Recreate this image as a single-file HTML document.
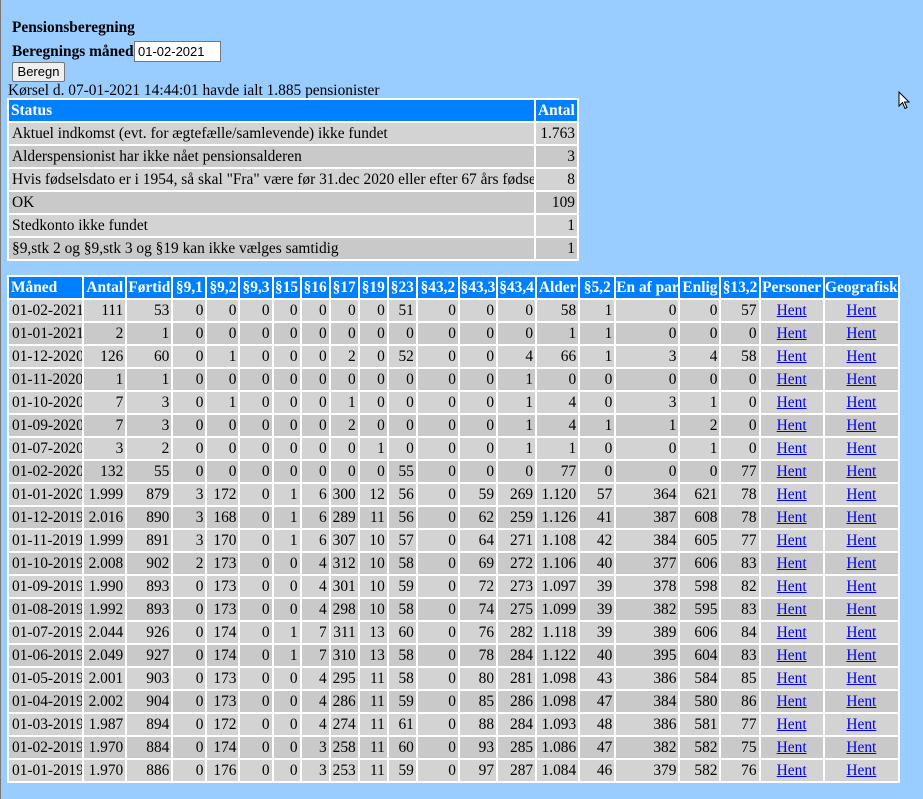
<!DOCTYPE html>
<html><head><meta charset="utf-8"><style>
html,body{margin:0;padding:0}
body{width:923px;height:799px;background:#99ccff;font-family:"Liberation Serif",serif;font-size:15.4px;color:#000;position:relative;overflow:hidden;border-left:1px solid #777;box-sizing:border-box}
.abs{position:absolute}
table{border-collapse:separate;border-spacing:2px;background:#fff;table-layout:fixed;position:absolute}
th{background:#0080ff;color:#fff;font-weight:bold;text-align:left;padding:0 2px;height:21px;white-space:nowrap;overflow:hidden}
td{height:21px;padding:0 2px;white-space:nowrap;overflow:hidden;text-align:right}
tr.a td{background:#d3d3d3}
tr.b td{background:#c9c9c9}
td.l{text-align:left;padding-left:3px}
td.c{text-align:center}
a{color:#00e;text-decoration:underline}
#t2 th{text-align:center;padding:0}
#t2 th.l{text-align:left;padding-left:2px}
</style></head><body>
<div class="abs" style="left:11px;top:19px;font-weight:bold">Pensionsberegning</div>
<div class="abs" style="left:11px;top:43px;font-weight:bold">Beregnings måned</div>
<div class="abs" style="left:133px;top:41px;width:87px;height:21px;background:#fff;border:1px solid #767676;box-sizing:border-box;font-family:'Liberation Sans',sans-serif;font-size:13px;line-height:19px;padding-left:3px">01-02-2021</div>
<div class="abs" style="left:11px;top:62px;width:53px;height:20px;background:#efefef;border:1px solid #767676;border-radius:2px;box-sizing:border-box;font-family:'Liberation Sans',sans-serif;font-size:13px;line-height:18px;text-align:center">Beregn</div>
<div class="abs" style="left:7px;top:82px">Kørsel d. 07-01-2021 14:44:01 havde ialt 1.885 pensionister</div>
<svg class="abs" style="left:897px;top:91px" width="14" height="20" viewBox="0 0 14 20"><path d="M1 1 L1 15 L4.5 11.5 L7 17.5 L9 16.5 L6.5 11 L11 11 Z" fill="#fff" stroke="#000" stroke-width="1"/></svg>

<table style="left:6px;top:98px;width:572px">
<colgroup><col style="width:525px"><col style="width:41px"></colgroup>
<tr><th>Status</th><th>Antal</th></tr>
<tr class="a"><td class="l">Aktuel indkomst (evt. for ægtefælle/samlevende) ikke fundet</td><td>1.763</td></tr>
<tr class="b"><td class="l">Alderspensionist har ikke nået pensionsalderen</td><td>3</td></tr>
<tr class="a"><td class="l">Hvis fødselsdato er i 1954, så skal "Fra" være før 31.dec 2020 eller efter 67 års fødselsdag</td><td>8</td></tr>
<tr class="b"><td class="l">OK</td><td>109</td></tr>
<tr class="a"><td class="l">Stedkonto ikke fundet</td><td>1</td></tr>
<tr class="b"><td class="l">§9,stk 2 og §9,stk 3 og §19 kan ikke vælges samtidig</td><td>1</td></tr>
</table>

<table id="t2" style="left:6px;top:275px;width:893px">
<colgroup><col style="width:73px"><col style="width:41px"><col style="width:44px"><col style="width:32px"><col style="width:31px"><col style="width:31px"><col style="width:26px"><col style="width:27px"><col style="width:27px"><col style="width:27px"><col style="width:27px"><col style="width:40px"><col style="width:36px"><col style="width:37px"><col style="width:41px"><col style="width:34px"><col style="width:62px"><col style="width:39px"><col style="width:37px"><col style="width:62px"><col style="width:73px"></colgroup>
<tr><th class="l">Måned</th><th>Antal</th><th>Førtid</th><th>§9,1</th><th>§9,2</th><th>§9,3</th><th>§15</th><th>§16</th><th>§17</th><th>§19</th><th>§23</th><th>§43,2</th><th>§43,3</th><th>§43,4</th><th>Alder</th><th>§5,2</th><th>En af par</th><th>Enlig</th><th>§13,2</th><th>Personer</th><th>Geografisk</th></tr>
<tr class="a"><td class="l">01-02-2021</td><td>111</td><td>53</td><td>0</td><td>0</td><td>0</td><td>0</td><td>0</td><td>0</td><td>0</td><td>51</td><td>0</td><td>0</td><td>0</td><td>58</td><td>1</td><td>0</td><td>0</td><td>57</td><td class="c"><a>Hent</a></td><td class="c"><a>Hent</a></td></tr>
<tr class="b"><td class="l">01-01-2021</td><td>2</td><td>1</td><td>0</td><td>0</td><td>0</td><td>0</td><td>0</td><td>0</td><td>0</td><td>0</td><td>0</td><td>0</td><td>0</td><td>1</td><td>1</td><td>0</td><td>0</td><td>0</td><td class="c"><a>Hent</a></td><td class="c"><a>Hent</a></td></tr>
<tr class="a"><td class="l">01-12-2020</td><td>126</td><td>60</td><td>0</td><td>1</td><td>0</td><td>0</td><td>0</td><td>2</td><td>0</td><td>52</td><td>0</td><td>0</td><td>4</td><td>66</td><td>1</td><td>3</td><td>4</td><td>58</td><td class="c"><a>Hent</a></td><td class="c"><a>Hent</a></td></tr>
<tr class="b"><td class="l">01-11-2020</td><td>1</td><td>1</td><td>0</td><td>0</td><td>0</td><td>0</td><td>0</td><td>0</td><td>0</td><td>0</td><td>0</td><td>0</td><td>1</td><td>0</td><td>0</td><td>0</td><td>0</td><td>0</td><td class="c"><a>Hent</a></td><td class="c"><a>Hent</a></td></tr>
<tr class="a"><td class="l">01-10-2020</td><td>7</td><td>3</td><td>0</td><td>1</td><td>0</td><td>0</td><td>0</td><td>1</td><td>0</td><td>0</td><td>0</td><td>0</td><td>1</td><td>4</td><td>0</td><td>3</td><td>1</td><td>0</td><td class="c"><a>Hent</a></td><td class="c"><a>Hent</a></td></tr>
<tr class="b"><td class="l">01-09-2020</td><td>7</td><td>3</td><td>0</td><td>0</td><td>0</td><td>0</td><td>0</td><td>2</td><td>0</td><td>0</td><td>0</td><td>0</td><td>1</td><td>4</td><td>1</td><td>1</td><td>2</td><td>0</td><td class="c"><a>Hent</a></td><td class="c"><a>Hent</a></td></tr>
<tr class="a"><td class="l">01-07-2020</td><td>3</td><td>2</td><td>0</td><td>0</td><td>0</td><td>0</td><td>0</td><td>0</td><td>1</td><td>0</td><td>0</td><td>0</td><td>1</td><td>1</td><td>0</td><td>0</td><td>1</td><td>0</td><td class="c"><a>Hent</a></td><td class="c"><a>Hent</a></td></tr>
<tr class="b"><td class="l">01-02-2020</td><td>132</td><td>55</td><td>0</td><td>0</td><td>0</td><td>0</td><td>0</td><td>0</td><td>0</td><td>55</td><td>0</td><td>0</td><td>0</td><td>77</td><td>0</td><td>0</td><td>0</td><td>77</td><td class="c"><a>Hent</a></td><td class="c"><a>Hent</a></td></tr>
<tr class="a"><td class="l">01-01-2020</td><td>1.999</td><td>879</td><td>3</td><td>172</td><td>0</td><td>1</td><td>6</td><td>300</td><td>12</td><td>56</td><td>0</td><td>59</td><td>269</td><td>1.120</td><td>57</td><td>364</td><td>621</td><td>78</td><td class="c"><a>Hent</a></td><td class="c"><a>Hent</a></td></tr>
<tr class="b"><td class="l">01-12-2019</td><td>2.016</td><td>890</td><td>3</td><td>168</td><td>0</td><td>1</td><td>6</td><td>289</td><td>11</td><td>56</td><td>0</td><td>62</td><td>259</td><td>1.126</td><td>41</td><td>387</td><td>608</td><td>78</td><td class="c"><a>Hent</a></td><td class="c"><a>Hent</a></td></tr>
<tr class="a"><td class="l">01-11-2019</td><td>1.999</td><td>891</td><td>3</td><td>170</td><td>0</td><td>1</td><td>6</td><td>307</td><td>10</td><td>57</td><td>0</td><td>64</td><td>271</td><td>1.108</td><td>42</td><td>384</td><td>605</td><td>77</td><td class="c"><a>Hent</a></td><td class="c"><a>Hent</a></td></tr>
<tr class="b"><td class="l">01-10-2019</td><td>2.008</td><td>902</td><td>2</td><td>173</td><td>0</td><td>0</td><td>4</td><td>312</td><td>10</td><td>58</td><td>0</td><td>69</td><td>272</td><td>1.106</td><td>40</td><td>377</td><td>606</td><td>83</td><td class="c"><a>Hent</a></td><td class="c"><a>Hent</a></td></tr>
<tr class="a"><td class="l">01-09-2019</td><td>1.990</td><td>893</td><td>0</td><td>173</td><td>0</td><td>0</td><td>4</td><td>301</td><td>10</td><td>59</td><td>0</td><td>72</td><td>273</td><td>1.097</td><td>39</td><td>378</td><td>598</td><td>82</td><td class="c"><a>Hent</a></td><td class="c"><a>Hent</a></td></tr>
<tr class="b"><td class="l">01-08-2019</td><td>1.992</td><td>893</td><td>0</td><td>173</td><td>0</td><td>0</td><td>4</td><td>298</td><td>10</td><td>58</td><td>0</td><td>74</td><td>275</td><td>1.099</td><td>39</td><td>382</td><td>595</td><td>83</td><td class="c"><a>Hent</a></td><td class="c"><a>Hent</a></td></tr>
<tr class="a"><td class="l">01-07-2019</td><td>2.044</td><td>926</td><td>0</td><td>174</td><td>0</td><td>1</td><td>7</td><td>311</td><td>13</td><td>60</td><td>0</td><td>76</td><td>282</td><td>1.118</td><td>39</td><td>389</td><td>606</td><td>84</td><td class="c"><a>Hent</a></td><td class="c"><a>Hent</a></td></tr>
<tr class="b"><td class="l">01-06-2019</td><td>2.049</td><td>927</td><td>0</td><td>174</td><td>0</td><td>1</td><td>7</td><td>310</td><td>13</td><td>58</td><td>0</td><td>78</td><td>284</td><td>1.122</td><td>40</td><td>395</td><td>604</td><td>83</td><td class="c"><a>Hent</a></td><td class="c"><a>Hent</a></td></tr>
<tr class="a"><td class="l">01-05-2019</td><td>2.001</td><td>903</td><td>0</td><td>173</td><td>0</td><td>0</td><td>4</td><td>295</td><td>11</td><td>58</td><td>0</td><td>80</td><td>281</td><td>1.098</td><td>43</td><td>386</td><td>584</td><td>85</td><td class="c"><a>Hent</a></td><td class="c"><a>Hent</a></td></tr>
<tr class="b"><td class="l">01-04-2019</td><td>2.002</td><td>904</td><td>0</td><td>173</td><td>0</td><td>0</td><td>4</td><td>286</td><td>11</td><td>59</td><td>0</td><td>85</td><td>286</td><td>1.098</td><td>47</td><td>384</td><td>580</td><td>86</td><td class="c"><a>Hent</a></td><td class="c"><a>Hent</a></td></tr>
<tr class="a"><td class="l">01-03-2019</td><td>1.987</td><td>894</td><td>0</td><td>172</td><td>0</td><td>0</td><td>4</td><td>274</td><td>11</td><td>61</td><td>0</td><td>88</td><td>284</td><td>1.093</td><td>48</td><td>386</td><td>581</td><td>77</td><td class="c"><a>Hent</a></td><td class="c"><a>Hent</a></td></tr>
<tr class="b"><td class="l">01-02-2019</td><td>1.970</td><td>884</td><td>0</td><td>174</td><td>0</td><td>0</td><td>3</td><td>258</td><td>11</td><td>60</td><td>0</td><td>93</td><td>285</td><td>1.086</td><td>47</td><td>382</td><td>582</td><td>75</td><td class="c"><a>Hent</a></td><td class="c"><a>Hent</a></td></tr>
<tr class="a"><td class="l">01-01-2019</td><td>1.970</td><td>886</td><td>0</td><td>176</td><td>0</td><td>0</td><td>3</td><td>253</td><td>11</td><td>59</td><td>0</td><td>97</td><td>287</td><td>1.084</td><td>46</td><td>379</td><td>582</td><td>76</td><td class="c"><a>Hent</a></td><td class="c"><a>Hent</a></td></tr>
</table>
</body></html>
